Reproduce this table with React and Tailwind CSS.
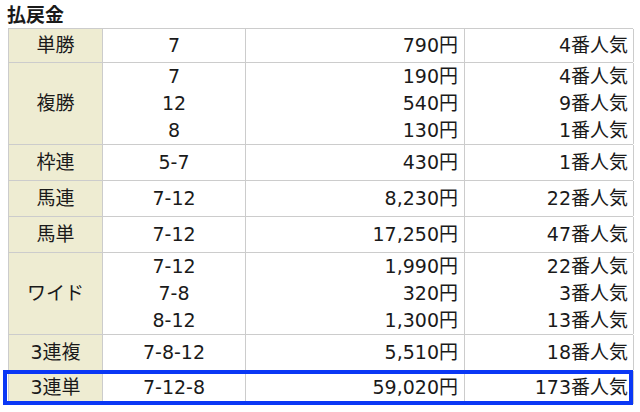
import React from 'react'

const rows = [
  { kind: '単勝', nums: ['7'], pays: ['790円'], pops: ['4番人気'], h: 'h-[34px]' },
  { kind: '複勝', nums: ['7', '12', '8'], pays: ['190円', '540円', '130円'], pops: ['4番人気', '9番人気', '1番人気'], h: 'h-[82px]' },
  { kind: '枠連', nums: ['5-7'], pays: ['430円'], pops: ['1番人気'], h: 'h-[36px]' },
  { kind: '馬連', nums: ['7-12'], pays: ['8,230円'], pops: ['22番人気'], h: 'h-[36px]' },
  { kind: '馬単', nums: ['7-12'], pays: ['17,250円'], pops: ['47番人気'], h: 'h-[36px]' },
  { kind: 'ワイド', nums: ['7-12', '7-8', '8-12'], pays: ['1,990円', '320円', '1,300円'], pops: ['22番人気', '3番人気', '13番人気'], h: 'h-[82px]' },
  { kind: '3連複', nums: ['7-8-12'], pays: ['5,510円'], pops: ['18番人気'], h: 'h-[36px]' },
  { kind: '3連単', nums: ['7-12-8'], pays: ['59,020円'], pops: ['173番人気'], h: 'h-[34px]' },
]

function Lines({ items }) {
  return items.map((t, i) => <div key={i}>{t}</div>)
}

export default function App() {
  return (
    <div
      className="relative w-[640px] h-[412px] bg-white text-[#1a1a1a]"
      style={{ fontFamily: '"DejaVu Sans", "Noto Sans CJK JP", sans-serif' }}
    >
      {/* heading */}
      <div className="h-[28px] pl-[7px] pt-[3px] text-[19px] leading-[24px] font-bold">払戻金</div>

      {/* payout table */}
      <div className="ml-[8px] w-[625px] border-t border-l border-[#cccccc] text-[19px] leading-[27px]">
        {rows.map((r) => (
          <div key={r.kind} className={`grid grid-cols-[94px_143px_219px_169px] border-b border-[#cccccc] ${r.h}`}>
            <div className="flex items-center justify-center bg-[#eeecd2] border-r border-[#cccccc]">{r.kind}</div>
            <div className="flex flex-col justify-center items-center border-r border-[#cccccc]">
              <Lines items={r.nums} />
            </div>
            <div className="flex flex-col justify-center items-end pr-[6px] border-r border-[#cccccc]">
              <Lines items={r.pays} />
            </div>
            <div className="flex flex-col justify-center items-end pr-[5px] border-r border-[#cccccc]">
              <Lines items={r.pops} />
            </div>
          </div>
        ))}
      </div>

      {/* highlight box over the last row */}
      <div className="absolute left-[3px] top-[370px] w-[630px] h-[35px] border-[4px] border-[#0a37f5]"></div>
    </div>
  )
}
